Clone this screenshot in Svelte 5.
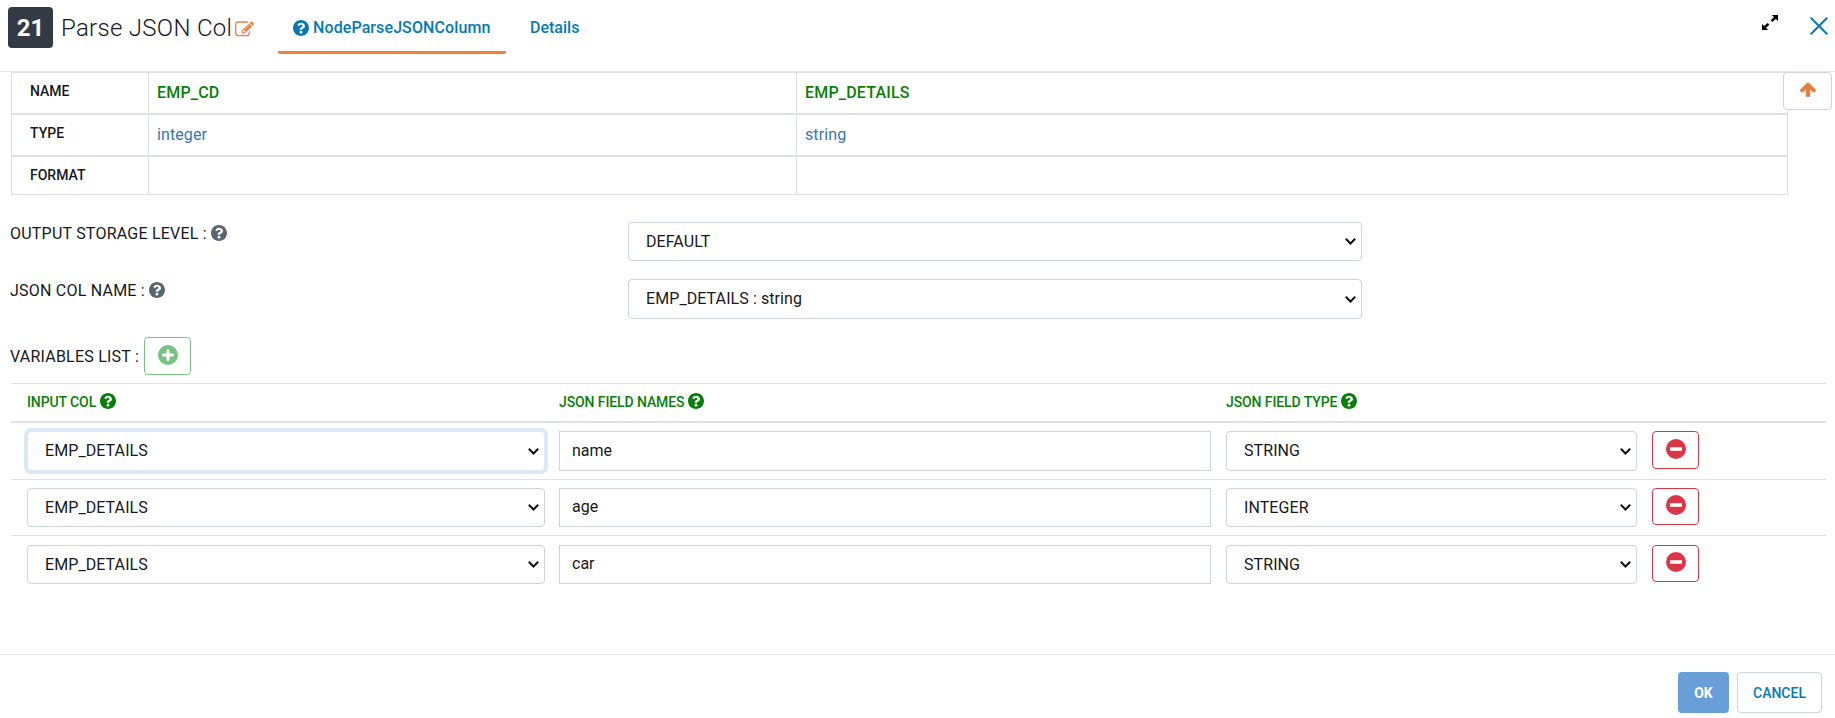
<script>
  const columns = [
    { name: 'EMP_CD', type: 'integer', format: '' },
    { name: 'EMP_DETAILS', type: 'string', format: '' }
  ];
  const attributes = ['name', 'type', 'format'];
  const headings = ['INPUT COL', 'JSON FIELD NAMES', 'JSON FIELD TYPE'];
  const variables = [
    { input: 'EMP_DETAILS', field: 'name', type: 'STRING', focused: true },
    { input: 'EMP_DETAILS', field: 'age', type: 'INTEGER', focused: false },
    { input: 'EMP_DETAILS', field: 'car', type: 'STRING', focused: false }
  ];
</script>

{#snippet help()}
  <svg class="help" viewBox="8 8 496 496" aria-hidden="true">
    <path d="M504 256c0 136.997-111.043 248-248 248S8 392.997 8 256C8 119.083 119.043 8 256 8s248 111.083 248 248zM262.655 90c-54.497 0-89.255 22.957-116.549 63.758-3.536 5.286-2.353 12.415 2.715 16.258l34.699 26.31c5.205 3.947 12.621 3.008 16.665-2.122 17.864-22.658 30.113-35.797 57.303-35.797 20.429 0 45.698 13.148 45.698 32.958 0 14.976-12.363 22.667-32.534 33.976C247.128 238.528 216 254.941 216 296v4c0 6.627 5.373 12 12 12h56c6.627 0 12-5.373 12-12v-1.333c0-28.462 83.186-29.647 83.186-106.667 0-58.002-60.165-102-116.531-102zM256 338c-25.365 0-46 20.635-46 46 0 25.364 20.635 46 46 46s46-20.636 46-46c0-25.364-20.635-46-46-46z" />
  </svg>
{/snippet}

<div class="dialog">
  <header>
    <span class="badge">21</span>
    <h1>Parse JSON Col</h1>
    <svg class="edit" viewBox="0 0 1792 1792" aria-hidden="true">
      <path d="M888 1184l116-116-152-152-116 116v56h96v96h56zm440-720q-16-16-33 1l-350 350q-17 17-1 33t33-1l350-350q17-17 1-33zm80 594v190q0 119-84.5 203.5t-203.5 84.5h-832q-119 0-203.5-84.5t-84.5-203.5v-832q0-119 84.5-203.5t203.5-84.5h832q63 0 117 25 15 7 18 23 3 17-9 29l-49 49q-14 14-32 8-23-6-45-6h-832q-66 0-113 47t-47 113v832q0 66 47 113t113 47h832q66 0 113-47t47-113v-126q0-13 9-22l64-64q15-15 35-7t20 29zm-96-738l288 288-672 672h-288v-288zm444 132l-92 92-288-288 92-92q28-28 68-28t68 28l152 152q28 28 28 68t-28 68z" />
    </svg>
    <nav>
      <span class="tab active">{@render help()}<span class="tab-node">NodeParseJSONColumn</span></span>
      <span class="tab details">Details</span>
    </nav>
    <svg class="expand" viewBox="0 0 16 15" aria-hidden="true">
      <path d="M9.800 0H16v6L13.900 4 10.300 7 8.700 5.300 12 2zM6.200 15H0V9L2.100 11 5.700 8 7.300 9.700 4 13z" />
    </svg>
    <svg class="close" viewBox="0 0 18 18" aria-hidden="true">
      <path d="M1.300 1.300 16.700 16.700M16.700 1.300 1.300 16.700" />
    </svg>
  </header>

  <main>
    <div class="schema-wrap">
      <div class="schema">
        {#each attributes as attribute}
          <div class="schema-row {attribute}">
            <span class="attr">{attribute.toUpperCase()}</span>
            {#each columns as column}
              <span class="cell">{column[attribute]}</span>
            {/each}
          </div>
        {/each}
      </div>
      <button class="up" aria-label="Up">
        <svg viewBox="0 0 16 15" aria-hidden="true">
          <path class="arrow-head" d="M2.200 8.400 8 2.600 13.800 8.400" />
          <path class="arrow-stem" d="M8 3.500V14.800" />
        </svg>
      </button>
    </div>

    <div class="field storage">
      <span class="label"><span class="t-storage">OUTPUT STORAGE LEVEL :</span>{@render help()}</span>
      <select><option>DEFAULT</option></select>
    </div>
    <div class="field column">
      <span class="label"><span class="t-column">JSON COL NAME :</span>{@render help()}</span>
      <select><option>EMP_DETAILS : string</option></select>
    </div>
    <div class="list-title">
      <span class="t-list">VARIABLES LIST :</span>
      <button class="add" aria-label="Add">
        <svg viewBox="0 0 20 20" aria-hidden="true">
          <circle cx="10" cy="10" r="10" />
          <path d="M10 5.500v9M5.500 10h9" />
        </svg>
      </button>
    </div>

    <div class="variables">
      <div class="grid head">
        {#each headings as heading}
          <span class="heading">{heading}{@render help()}</span>
        {/each}
      </div>
      {#each variables as variable}
        <div class="grid row">
          <select class:focused={variable.focused}><option>{variable.input}</option></select>
          <input type="text" value={variable.field} />
          <select class="kind"><option>{variable.type}</option></select>
          <button class="remove" aria-label="Remove">
            <svg viewBox="0 0 20 20" aria-hidden="true">
              <circle cx="10" cy="10" r="10" />
              <path d="M4 10h12" />
            </svg>
          </button>
        </div>
      {/each}
    </div>
  </main>

  <footer>
    <button class="ok">OK</button>
    <button class="cancel">CANCEL</button>
  </footer>
</div>

<style>
  :global(body) {
    background: #fff;
  }
  .dialog,
  .dialog * {
    box-sizing: border-box;
  }
  .dialog {
    display: flex;
    flex-direction: column;
    width: 1835px;
    height: 718px;
    overflow: hidden;
    font: 400 16px/24px Roboto, sans-serif;
    color: #16181b;
  }
  button,
  select,
  input {
    margin: 0;
    font: inherit;
    color: inherit;
    background: #fff;
  }
  button {
    display: flex;
    justify-content: center;
    padding: 0;
    border-radius: 4px;
  }
  svg {
    display: block;
    flex: none;
    fill: currentColor;
  }
  .help {
    width: 16px;
    height: 16px;
  }

  header {
    display: flex;
    height: 72px;
    flex: none;
    align-items: flex-start;
    padding: 7px 7px 0 8px;
    border-bottom: 1px solid #e6e8eb;
  }
  .badge {
    width: 45px;
    height: 41px;
    border-radius: 4px;
    background: #343a43;
    color: #fff;
    font-size: 24px;
    font-weight: 700;
    line-height: 42px;
    text-align: center;
  }
  h1 {
    width: 174px;
    margin: 0 0 0 8px;
    font-size: 24px;
    font-weight: 300;
    line-height: 43px;
    letter-spacing: 0.3px;
    white-space: nowrap;
  }
  .edit {
    width: 19px;
    height: 19px;
    margin-top: 13px;
    color: #ea8145;
  }
  nav {
    display: flex;
    margin-left: 24px;
    color: #0679b5;
    font-weight: 500;
  }
  .tab {
    display: flex;
    height: 47px;
    align-items: center;
    padding-bottom: 5px;
  }
  .tab-node {
    letter-spacing: 0.1px;
  }
  .active {
    width: 228px;
    gap: 4px;
    padding-left: 15px;
    padding-bottom: 2px;
    border-bottom: 3px solid #f67c38;
    border-radius: 2px;
  }
  .details {
    margin-left: 24px;
  }
  .expand {
    width: 16px;
    height: 15px;
    margin: 8px 32px 0 auto;
    color: #000;
  }
  .close {
    width: 18px;
    height: 18px;
    margin-top: 10px;
    fill: none;
    stroke: #0679ae;
    stroke-width: 2;
    stroke-linecap: round;
  }

  main {
    height: 582px;
    flex: none;
    padding: 0 9px 0 11px;
  }
  .schema-wrap {
    display: flex;
    height: 123px;
    margin-right: -6px;
  }
  .schema {
    width: 1777px;
    flex: none;
    border: 1px solid #dee2e6;
  }
  .schema-row {
    display: grid;
    grid-template-columns: 136px 648px 1fr;
    height: 42px;
    border-bottom: 2px solid #dee2e6;
  }
  .schema-row.format {
    height: 37px;
    border-bottom: 0;
  }
  .attr {
    padding: 6px 0 0 18px;
    font-size: 14px;
    font-weight: 500;
  }
  .cell {
    padding: 8px 0 0 8px;
    border-left: 1px solid #dee2e6;
    color: #3b74b8;
    letter-spacing: 0.1px;
  }
  .name .cell {
    color: #087f08;
    font-weight: 500;
    letter-spacing: 0.2px;
  }
  .up {
    width: 49px;
    height: 38px;
    flex: none;
    margin-left: -5px;
    padding-top: 9px;
    border: 1px solid #ced4da;
    color: #e57f41;
  }
  .up svg {
    width: 16px;
    height: 15px;
    fill: none;
    stroke: currentColor;
    stroke-linejoin: round;
  }
  .arrow-head {
    stroke-width: 4;
    stroke-linecap: round;
  }
  .arrow-stem {
    stroke-width: 4.4;
  }

  .field {
    display: flex;
    align-items: flex-start;
  }
  .storage {
    height: 57px;
    margin-top: 27px;
  }
  .column {
    height: 58px;
  }
  .label {
    display: flex;
    width: 618px;
    margin-left: -1px;
  }
  .label,
  .list-title {
    letter-spacing: 0.22px;
    white-space: nowrap;
  }
  .t-storage {
    width: 201px;
  }
  .t-column {
    width: 139px;
  }
  .label .help {
    margin-top: 3px;
    color: #5a6570;
  }
  .field select {
    width: 734px;
    height: 39px;
  }
  .column select {
    height: 40px;
  }
  select,
  input {
    width: 100%;
    height: 39px;
    border: 1px solid #ced4da;
  }
  select {
    appearance: none;
    padding: 0 24px 0 17px;
    border-radius: 4px;
    background: #fff
      url("data:image/svg+xml,%3Csvg xmlns='http://www.w3.org/2000/svg' width='11' height='7'%3E%3Cpath d='M.8.800 5.500 5.500 10.200.8' fill='none' stroke='%23111' stroke-width='2'/%3E%3C/svg%3E")
      no-repeat right 5px center;
    letter-spacing: 0.08px;
  }
  .list-title {
    display: flex;
    height: 46px;
    margin-left: -1px;
  }
  .t-list {
    width: 134px;
    padding-top: 8px;
  }
  .add {
    width: 47px;
    height: 38px;
    padding-top: 7px;
    border: 1px solid #76c382;
    color: #76c382;
  }
  .add svg,
  .remove svg {
    width: 20px;
    height: 20px;
  }
  .add path,
  .remove path {
    stroke: #fff;
    stroke-width: 3;
    stroke-linecap: round;
  }
  .remove path {
    stroke-width: 3.6;
    stroke-linecap: butt;
  }

  .variables {
    border-top: 1px solid #dee2e6;
  }
  .grid {
    display: grid;
    grid-template-columns: 518px 653px 412px 47px;
    column-gap: 14px;
    padding-left: 16px;
  }
  .head {
    height: 39px;
    border-bottom: 2px solid #dee2e6;
    color: #087f08;
    font-size: 14px;
    font-weight: 500;
    letter-spacing: -0.1px;
  }
  .heading {
    display: flex;
    gap: 4px;
    padding-top: 6px;
  }
  .heading .help {
    margin-top: 3px;
  }
  .row {
    height: 57px;
    padding-top: 8px;
    border-bottom: 1px solid #dee2e6;
  }
  .row:nth-child(3) {
    height: 56px;
  }
  .row:nth-child(4) {
    padding-top: 9px;
    border-bottom: 0;
  }
  .row:nth-child(2) :is(select, input) {
    height: 40px;
  }
  .row input {
    width: 652px;
    padding: 0 12px 2px;
    border-radius: 0;
  }
  .kind {
    width: 411px;
  }
  .focused {
    border-color: #dbe8f6;
    box-shadow: 0 0 0 3px #dbe8f6;
  }
  .remove {
    height: 37px;
    padding-top: 6px;
    border: 1px solid #dc3545;
    color: #dc3545;
  }
  .row:nth-child(2) .remove {
    height: 38px;
    padding-top: 7px;
  }

  footer {
    display: flex;
    height: 64px;
    flex: none;
    justify-content: flex-end;
    gap: 8px;
    padding: 17px 13px 0 0;
    border-top: 1px solid #e6e8eb;
  }
  footer button {
    height: 41px;
    align-items: center;
    font-size: 14px;
    font-weight: 500;
  }
  .ok {
    width: 51px;
    border: 0;
    background: #699fd9;
    color: #fff;
    font-weight: 700;
  }
  .cancel {
    width: 85px;
    border: 1px solid #ced4da;
    color: #0679b5;
  }
</style>
